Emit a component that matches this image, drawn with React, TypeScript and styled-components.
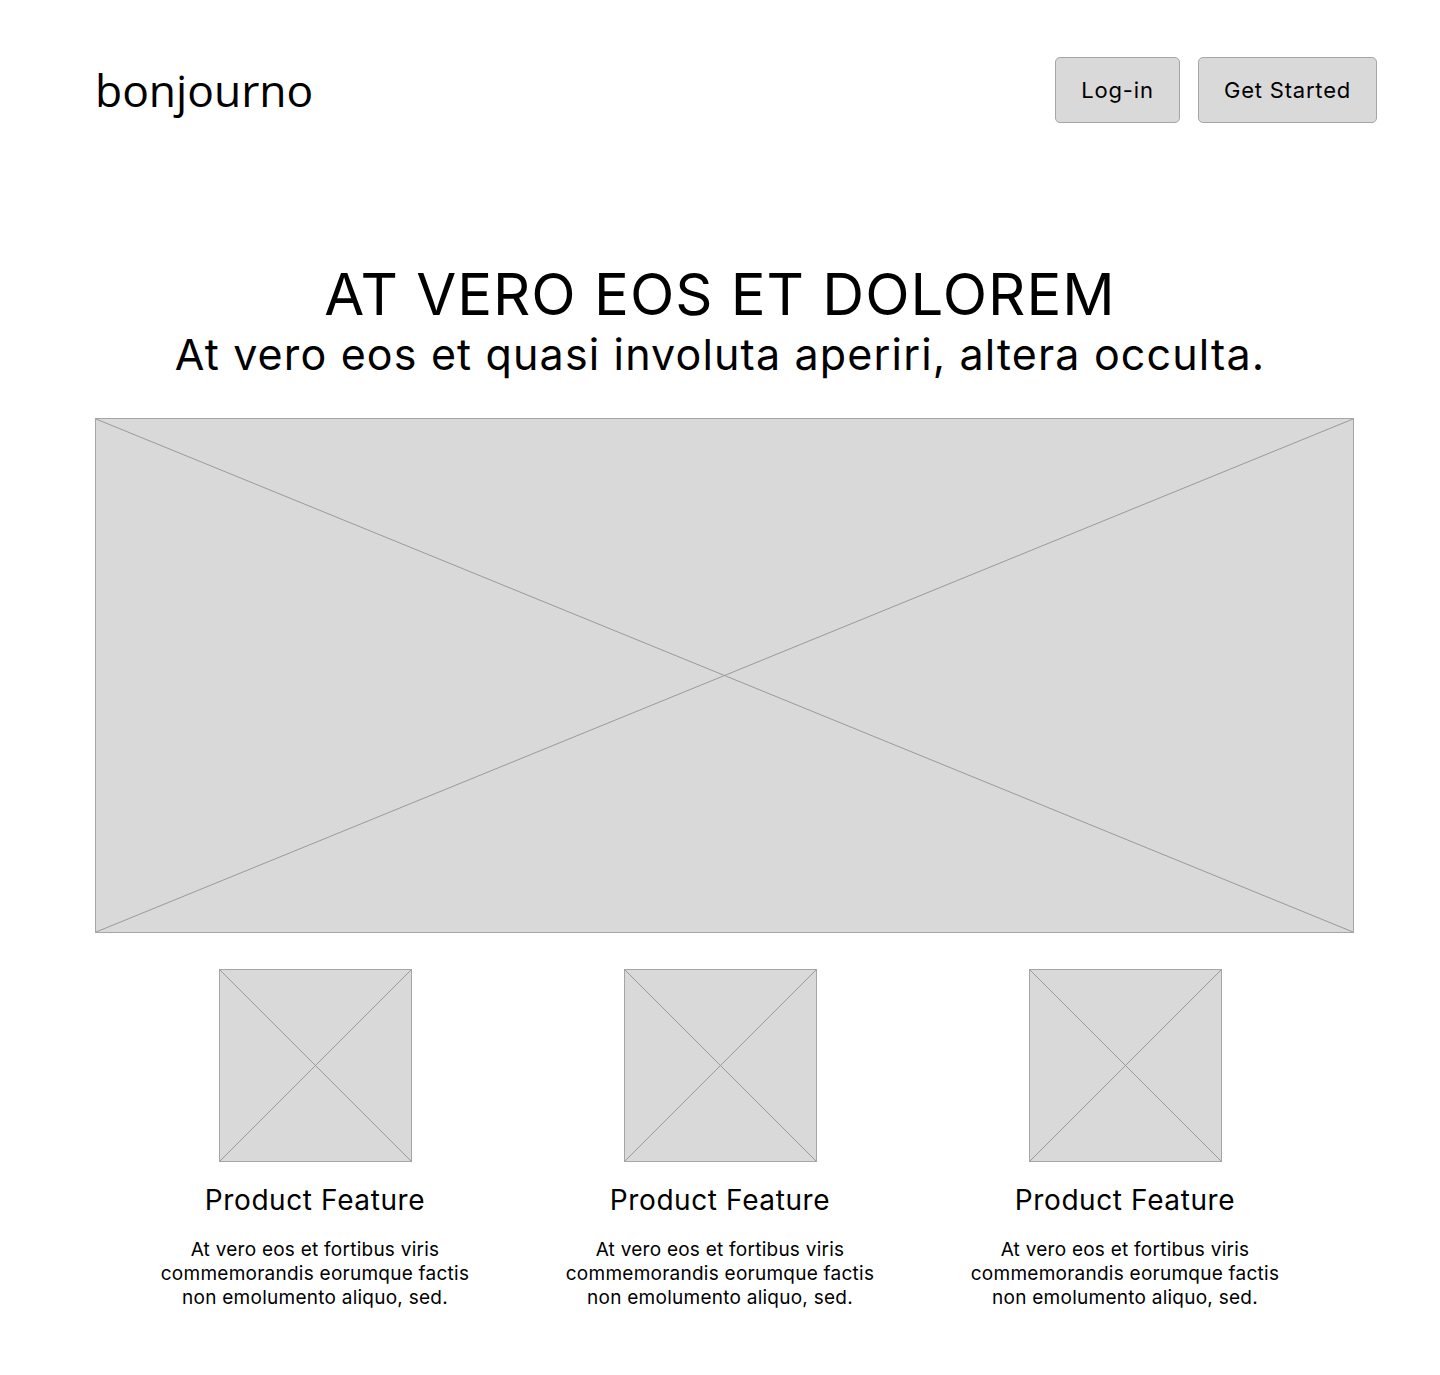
import React from "react";
import styled, { createGlobalStyle } from "styled-components";

const Global = createGlobalStyle`
  html, body { margin: 0; padding: 0; background: #fff; }
  body { font-family: Inter, "Noto Sans", sans-serif; color: #000; }
  * { box-sizing: border-box; }
`;

const Page = styled.div`
  width: 1440px;
  min-height: 1375px;
  display: flex;
  flex-direction: column;
`;

const Header = styled.header`
  display: flex;
  align-items: center;
  justify-content: space-between;
  padding: 57px 63px 0 95px;
`;

const Logo = styled.div`
  font-family: "Open Sans", "Noto Sans", sans-serif;
  font-size: 44.4px;
  line-height: 65px;
`;

const Actions = styled.div`
  display: flex;
  gap: 18px;
`;

const Button = styled.button<{ $w: number }>`
  width: ${(p) => p.$w}px;
  height: 66px;
  background: #d9d9d9;
  border: 1px solid #a6a6a6;
  border-radius: 5px;
  font-family: Inter, sans-serif;
  font-size: 22px;
  color: #000;
  letter-spacing: 0.8px;
  padding: 0;
`;

const Hero = styled.section`
  display: flex;
  flex-direction: column;
  align-items: center;
  padding-top: 136px;
`;

const Title = styled.h1`
  margin: 0;
  font-weight: 400;
  font-size: 58px;
  line-height: 70px;
  letter-spacing: 1px;
`;

const Subtitle = styled.p`
  margin: 0;
  font-size: 43px;
  line-height: 50px;
  letter-spacing: 1.15px;
`;

const Placeholder = styled.div<{ $w: number; $h: number }>`
  width: ${(p) => p.$w}px;
  height: ${(p) => p.$h}px;
  background: #d9d9d9;
  border: 1px solid #a6a6a6;
  flex: none;
  svg { display: block; width: 100%; height: 100%; }
`;

const HeroImageWrap = styled.div`
  padding: 39px 0 0 95px;
`;

const Features = styled.section`
  display: flex;
  justify-content: center;
  padding-top: 36px;
`;

const Feature = styled.div`
  width: 405px;
  display: flex;
  flex-direction: column;
  align-items: center;
  text-align: center;
`;

const FeatureTitle = styled.h3`
  margin: 18px 0 0;
  font-weight: 400;
  font-size: 28px;
  line-height: 40px;
  letter-spacing: 0.6px;
`;

const FeatureText = styled.p`
  margin: 18px 0 0;
  width: 330px;
  font-size: 19px;
  line-height: 24px;
  letter-spacing: 0.25px;
`;

const Cross = () => (
  <svg viewBox="0 0 100 100" preserveAspectRatio="none">
    <line x1="0" y1="0" x2="100" y2="100" stroke="#9a9a9a" strokeWidth="1" vectorEffect="non-scaling-stroke" />
    <line x1="100" y1="0" x2="0" y2="100" stroke="#9a9a9a" strokeWidth="1" vectorEffect="non-scaling-stroke" />
  </svg>
);

const features = [0, 1, 2];

export default function App() {
  return (
    <Page>
      <Global />
      <Header>
        <Logo>bonjourno</Logo>
        <Actions>
          <Button $w={125}>Log-in</Button>
          <Button $w={179}>Get Started</Button>
        </Actions>
      </Header>
      <Hero>
        <Title>AT VERO EOS ET DOLOREM</Title>
        <Subtitle>At vero eos et quasi involuta aperiri, altera occulta.</Subtitle>
      </Hero>
      <HeroImageWrap>
        <Placeholder $w={1259} $h={515}>
          <Cross />
        </Placeholder>
      </HeroImageWrap>
      <Features>
        {features.map((i) => (
          <Feature key={i}>
            <Placeholder $w={193} $h={193}>
              <Cross />
            </Placeholder>
            <FeatureTitle>Product Feature</FeatureTitle>
            <FeatureText>
              At vero eos et fortibus viris commemorandis eorumque factis non emolumento aliquo, sed.
            </FeatureText>
          </Feature>
        ))}
      </Features>
    </Page>
  );
}
